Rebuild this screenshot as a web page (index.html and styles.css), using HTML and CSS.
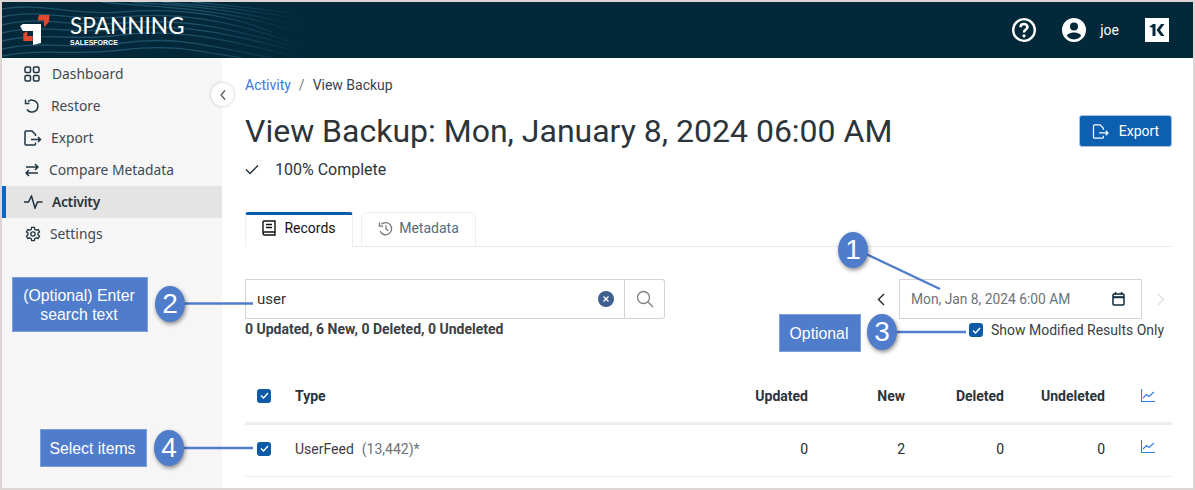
FILE: index.html
```html
<!DOCTYPE html>
<html lang="en">
<head>
<meta charset="utf-8">
<title>View Backup</title>
<link rel="stylesheet" href="styles.css">
</head>
<body>
<div class="frame">
  <header class="topbar">
    <svg class="waves" width="330" height="56" viewBox="0 0 330 56" fill="none" stroke="#1f5068" stroke-width="1.300">
      <path d="M0 7C40 0 70 14 120 10S220 10 270 30"/>
      <path d="M0 15C40 6 70 20 120 15S220 16 290 40"/>
      <path d="M0 23C40 13 70 26 120 21S220 22 310 50"/>
      <path d="M0 31C40 21 70 33 120 27S220 28 320 56"/>
      <path d="M0 39C40 29 70 40 120 33S220 36 300 56"/>
      <path d="M0 47C40 38 70 48 120 41S200 42 270 56"/>
      <path d="M0 54C40 46 70 54 120 48S190 48 240 56"/>
      <path d="M100 0C150 6 230 2 330 42"/>
      <path d="M130 0C170 4 230 2 330 34"/>
      <path d="M160 0C200 4 260 6 330 26"/>
      <path d="M190 0C230 4 280 8 330 18"/>
    </svg>
    <div class="brand">
      <svg class="brand-mark" width="32" height="32" viewBox="0 0 32 32">
        <g transform="translate(0 1)">
          <path d="M0 11L3 9H21V28L13 30V16H3Z" fill="#fff"/>
          <path d="M19 0H29.500L29 7L24 12V5.500H17.500Z" fill="#e2492f"/>
          <path d="M3.300 18.500L7.300 16V21H12.700V26H3.300Z" fill="#e2492f"/>
        </g>
      </svg>
      <div class="brand-text">
        <div class="brand-name">SPANNING</div>
        <div class="brand-sub">SALESFORCE</div>
      </div>
    </div>
    <div class="top-actions">
      <svg class="top-help" width="26" height="26" viewBox="0 0 24 24" fill="none" stroke="#fff">
        <circle cx="12" cy="12" r="10" stroke-width="2.200"/>
        <path d="M8.800 9.400C8.800 7.600 10.200 6.500 12 6.500S15.200 7.700 15.200 9.300C15.200 11.600 12 11.600 12 14.200" stroke-width="2.400"/>
        <circle cx="12" cy="17.400" r="1.500" fill="#fff" stroke="none"/>
      </svg>
      <svg class="top-user" width="24" height="24" viewBox="0 0 24 24">
        <path fill-rule="evenodd" fill="#fff" d="M12 0a12 12 0 1 0 0 24a12 12 0 0 0 0-24ZM12 4.600a4 4 0 1 1 0 8a4 4 0 0 1 0-8ZM12 21.400c-3 0-5.600-1.400-7.100-3.600c.4-2 4-3.300 7.100-3.300s6.700 1.300 7.100 3.300c-1.500 2.200-4.100 3.600-7.100 3.600Z"/>
      </svg>
      <span class="top-name">joe</span>
      <span class="kbadge">
        <svg width="16" height="12" viewBox="0 0 16 12"><path d="M0 3L4 0H6.500V12H3.500V3.500ZM7.500 6L12 0H15.500L11 6L15.500 12H12Z" fill="#02283a"/></svg>
      </span>
    </div>
  </header>
  <div class="body">
    <nav class="sidebar">
      <a class="nav-item nav-dash">
        <svg width="16" height="16" viewBox="0 0 16 16" fill="none" stroke="#1f3442" stroke-width="1.500"><rect x="1" y="1" width="5.500" height="5.500" rx="1.200"/><rect x="9.500" y="1" width="5.500" height="5.500" rx="1.200"/><rect x="1" y="9.500" width="5.500" height="5.500" rx="1.200"/><rect x="9.500" y="9.500" width="5.500" height="5.500" rx="1.200"/></svg>
        <span>Dashboard</span>
      </a>
      <a class="nav-item nav-rest">
        <svg width="16" height="16" viewBox="0 0 16 16" fill="none" stroke="#1f3442" stroke-width="1.500"><path d="M4 3.600A6 6 0 1 1 3 11.500"/><path d="M1.500 1.500V5.500H5.500" stroke-width="1.400"/></svg>
        <span>Restore</span>
      </a>
      <a class="nav-item nav-exp">
        <svg width="18" height="16" viewBox="0 0 18 16" fill="none" stroke="#1f3442" stroke-width="1.500"><path d="M11.500 12.500V14A1 1 0 0 1 10.500 15H2A1 1 0 0 1 1 14V2A1 1 0 0 1 2 1H8L11.500 4.500V6"/><path d="M7 9.500H16.500M14 7L16.500 9.500L14 12"/></svg>
        <span>Export</span>
      </a>
      <a class="nav-item nav-cmp">
        <svg width="14" height="14" viewBox="0 0 14 14" fill="none" stroke="#1f3442" stroke-width="1.500"><path d="M1 4H13M10 1L13 4L10 7"/><path d="M13 10H1M4 7L1 10L4 13"/></svg>
        <span>Compare Metadata</span>
      </a>
      <a class="nav-item nav-act is-active">
        <svg width="19" height="14" viewBox="0 0 19 14" fill="none" stroke="#1f3442" stroke-width="1.500"><path d="M0 7H4.500L7.500 1L11 13L13.500 7H18.500"/></svg>
        <span>Activity</span>
      </a>
      <a class="nav-item nav-set">
        <svg width="16" height="16" viewBox="0 0 24 24" fill="none" stroke="#1f3442" stroke-width="2"><circle cx="12" cy="12" r="3.200"/><path d="M10 2H14L14.600 5A7.500 7.500 0 0 1 16.900 6.300L19.800 5.300L21.800 8.700L19.500 10.700A7.500 7.500 0 0 1 19.500 13.300L21.800 15.300L19.800 18.700L16.900 17.700A7.500 7.500 0 0 1 14.600 19L14 22H10L9.400 19A7.500 7.500 0 0 1 7.100 17.700L4.200 18.700L2.200 15.300L4.500 13.300A7.500 7.500 0 0 1 4.500 10.700L2.200 8.700L4.200 5.300L7.100 6.300A7.500 7.500 0 0 1 9.400 5Z"/></svg>
        <span>Settings</span>
      </a>
    </nav>
    <main class="main">
      <div class="crumbs"><a class="crumb-link">Activity</a><span class="crumb-sep">/</span><span>View Backup</span></div>
      <div class="title-row">
        <h1 class="title">View Backup: Mon, January 8, 2024 06:00 AM</h1>
        <button class="export-btn">
          <svg width="18" height="15" viewBox="0 0 18 16" fill="none" stroke="#fff" stroke-width="1.300"><path d="M11.500 12.500V14A1 1 0 0 1 10.500 15H2A1 1 0 0 1 1 14V2A1 1 0 0 1 2 1H8L11.500 4.500V6"/><path d="M7 9.500H16.500M14 7L16.500 9.500L14 12"/></svg>
          <span>Export</span>
        </button>
      </div>
      <div class="status">
        <svg width="14" height="11" viewBox="0 0 14 11" fill="none" stroke="#1f3442" stroke-width="1.400"><path d="M1 5.500L5 9.500L13 1.500"/></svg>
        <span>100% Complete</span>
      </div>
      <div class="tabs">
        <div class="tab is-current">
          <svg width="14" height="16" viewBox="0 0 14 16" fill="none" stroke="#111" stroke-width="1.400"><path d="M1 13V2A1 1 0 0 1 2 1H13V12H2.500A1.500 1.500 0 0 0 2.500 15H13V12"/><path d="M4 4.500H10M4 7.500H10"/></svg>
          <span>Records</span>
        </div>
        <div class="tab">
          <svg width="15" height="15" viewBox="0 0 16 16" fill="none" stroke="#777" stroke-width="1.400"><path d="M3.500 3.500A6.500 6.500 0 1 1 2.200 11"/><path d="M1.500 1.500V5.500H5.500M8.500 4.500V8.500L11 10.500"/></svg>
          <span>Metadata</span>
        </div>
      </div>
      <div class="controls">
        <div class="search-col">
          <div class="search">
            <div class="search-input">
              <span>user</span>
              <span class="clear"><svg width="6" height="6" viewBox="0 0 6 6" stroke="#fff" stroke-width="1.300"><path d="M0.500 0.500L5.500 5.500M5.500 0.500L0.500 5.500"/></svg></span>
            </div>
            <div class="search-btn">
              <svg width="18" height="18" viewBox="0 0 18 18" fill="none" stroke="#808080" stroke-width="1.300"><circle cx="7.500" cy="7.500" r="6"/><path d="M11.800 11.800L17 17"/></svg>
            </div>
          </div>
          <div class="summary">0 Updated, 6 New, 0 Deleted, 0 Undeleted</div>
        </div>
        <div class="date-col">
          <div class="date-row">
            <svg class="chev" width="8" height="13" viewBox="0 0 8 13" fill="none" stroke="#222" stroke-width="1.400"><path d="M7 1L1.500 6.500L7 12"/></svg>
            <div class="date-input">
              <span>Mon, Jan 8, 2024 6:00 AM</span>
              <svg width="13" height="14" viewBox="0 0 13 14" fill="none" stroke="#0f2a3a" stroke-width="1.500"><rect x="1" y="2" width="11" height="11" rx="1"/><path d="M1 5.200H12" stroke-width="2"/><path d="M3.500 0V2.500M9.500 0V2.500"/></svg>
            </div>
            <svg class="chev" width="8" height="13" viewBox="0 0 8 13" fill="none" stroke="#dcdcdc" stroke-width="1.400"><path d="M1 1L6.500 6.500L1 12"/></svg>
          </div>
          <div class="modified">
            <span class="check"><svg width="9" height="7" viewBox="0 0 9 7" fill="none" stroke="#fff" stroke-width="1.400"><path d="M1 3.500L3.500 6L8 1"/></svg></span>
            <span>Show Modified Results Only</span>
          </div>
        </div>
      </div>
      <div class="table">
        <div class="row row-head">
          <span class="cell-check"><span class="check"><svg width="9" height="7" viewBox="0 0 9 7" fill="none" stroke="#fff" stroke-width="1.400"><path d="M1 3.500L3.500 6L8 1"/></svg></span></span>
          <span>Type</span>
          <span class="num">Updated</span>
          <span class="num">New</span>
          <span class="num">Deleted</span>
          <span class="num">Undeleted</span>
          <span class="cell-chart"><svg width="14" height="13" viewBox="0 0 14 13" fill="none" stroke="#2f7be5" stroke-width="1.100"><path d="M0.500 0V12.500H14"/><path d="M2 9L5.500 5.500L8 7.500L13 3"/></svg></span>
        </div>
        <div class="row row-data">
          <span class="cell-check"><span class="check"><svg width="9" height="7" viewBox="0 0 9 7" fill="none" stroke="#fff" stroke-width="1.400"><path d="M1 3.500L3.500 6L8 1"/></svg></span></span>
          <span class="type-cell"><span class="type-name">UserFeed</span><span class="type-count">(13,442)*</span></span>
          <span class="num">0</span>
          <span class="num">2</span>
          <span class="num">0</span>
          <span class="num">0</span>
          <span class="cell-chart"><svg width="14" height="13" viewBox="0 0 14 13" fill="none" stroke="#2f7be5" stroke-width="1.100"><path d="M0.500 0V12.500H14"/><path d="M2 9L5.500 5.500L8 7.500L13 3"/></svg></span>
        </div>
      </div>
    </main>
  </div>
  <span class="collapse"><svg width="6" height="10" viewBox="0 0 6 10" fill="none" stroke="#555" stroke-width="1.200"><path d="M5 0.500L1 5L5 9.500"/></svg></span>
  <svg class="leaders" width="1195" height="490" viewBox="0 0 1195 490" fill="none" stroke="#4f7ccb" stroke-width="2.400">
    <path d="M866 254L940 289"/>
    <path d="M180 303.500H253"/>
    <path d="M895 332H966"/>
    <path d="M180 448H253"/>
  </svg>
  <div class="note note-search">(Optional) Enter<br>search text</div>
  <div class="note note-optional">Optional</div>
  <div class="note note-select">Select items</div>
  <div class="bubble b1">1</div>
  <div class="bubble b2">2</div>
  <div class="bubble b3">3</div>
  <div class="bubble b4">4</div>
</div>
</body>
</html>
```
FILE: styles.css
```css
* { box-sizing: border-box; }
html, body { margin: 0; padding: 0; }
body { width: 1195px; height: 490px; overflow: hidden; background: #fff; font-family: Roboto, "Liberation Sans", sans-serif; color: #212b33; }
.frame { position: relative; width: 1195px; height: 490px; border: 2px solid #dcd5d3; display: flex; flex-direction: column; overflow: hidden; }
.topbar { position: relative; height: 56px; flex: none; background: #02283a; display: flex; align-items: center; justify-content: space-between; }
.waves { position: absolute; left: 0; top: 0; -webkit-mask-image: linear-gradient(90deg, #000 60%, transparent 92%); mask-image: linear-gradient(90deg, #000 60%, transparent 92%); }
.brand { position: relative; display: flex; align-items: center; gap: 18px; padding-left: 18px; }
.brand-text { color: #fff; padding-top: 1px; }
.brand-name { font-family: Lato, sans-serif; font-size: 22.6px; line-height: 24px; }
.brand-sub { font-family: "Liberation Sans", sans-serif; font-size: 7px; font-weight: 700; line-height: 8px; margin-top: 1px; }
.top-actions { display: flex; align-items: center; padding-right: 24px; }
.top-user { margin-left: 25px; }
.top-name { margin-left: 14px; color: #fff; font-size: 14px; }
.kbadge { margin-left: 26px; width: 24px; height: 24px; background: #fff; display: flex; align-items: center; justify-content: center; }
.body { flex: 1; display: flex; min-height: 0; }
.sidebar { width: 220px; flex: none; background: #f6f6f6; font-family: "Noto Sans", sans-serif; font-size: 13.8px; color: #3d4a55; }
.nav-item { height: 32px; display: flex; align-items: center; padding-left: 22px; }
.nav-item span { margin-bottom: 2px; }
.nav-dash { gap: 12px; }
.nav-rest { gap: 11px; }
.nav-exp { gap: 9px; }
.nav-cmp { gap: 10px; padding-left: 23px; }
.nav-act { gap: 9px; }
.nav-set { gap: 9px; padding-left: 23px; }
.is-active { background: #e4e4e4; border-left: 4px solid #0a66c9; padding-left: 18px; font-weight: 600; letter-spacing: -0.3px; color: #2a333b; }
.main { flex: 1; min-width: 0; padding: 0 21px 0 23px; }
.crumbs { display: flex; align-items: center; height: 20px; margin-top: 17px; font-size: 14px; color: #3a444c; }
.crumb-link { color: #3a76e0; }
.crumb-sep { margin: 0 8px; color: #777; }
.title-row { display: flex; justify-content: space-between; align-items: flex-start; margin-top: 15px; }
.title { margin: 0; font-size: 32px; line-height: 42px; font-weight: 400; color: #2c343a; }
.export-btn { margin-top: 5px; width: 93px; height: 32px; background: #0d5fb0; border: 1px solid #a9c2dc; border-radius: 3px; color: #fff; display: flex; align-items: center; justify-content: center; gap: 9px; font: 14px Roboto, sans-serif; padding: 0; }
.status { display: flex; align-items: center; gap: 16px; margin-top: 5px; height: 24px; font-size: 16px; color: #2c343a; }
.tabs { display: flex; gap: 8px; margin-top: 31px; height: 35px; border-bottom: 1px solid #eaeaea; }
.tab { width: 115px; height: 35px; display: flex; align-items: center; justify-content: center; gap: 6px; border: 1px solid #eeeeee; border-bottom: 0; border-radius: 6px 6px 0 0; padding-bottom: 4px; font-size: 14px; color: #556a80; }
.tab.is-current { width: 108px; gap: 8px; border-top: 3px solid #0a5aaa; border-color: #0a5aaa #eeeeee #fff #eeeeee; border-radius: 3px 3px 0 0; padding-bottom: 7px; color: #111; background: #fff; }
.controls { display: flex; justify-content: space-between; margin-top: 32px; }
.search { display: flex; width: 420px; height: 40px; }
.search-input { flex: 1; border: 1px solid #d4d4d4; display: flex; align-items: center; justify-content: space-between; padding: 0 10px 0 11px; font-size: 15px; color: #333; }
.clear { width: 16px; height: 16px; border-radius: 50%; background: #3f5f8f; display: flex; align-items: center; justify-content: center; }
.search-btn { width: 40px; border: 1px solid #d4d4d4; border-left: 0; border-radius: 0 3px 3px 0; display: flex; align-items: center; justify-content: center; }
.summary { margin-top: 2px; font-size: 14px; font-weight: 700; line-height: 16px; color: #3a4046; }
.date-col { width: 293px; margin-right: 2px; }
.date-row { display: flex; align-items: center; }
.date-input { width: 243px; height: 40px; margin-left: 14px; border: 1px solid #d4d4d4; display: flex; align-items: center; justify-content: space-between; padding: 0 16px 0 11px; font-size: 13.8px; color: #6b7278; }
.date-row .chev:last-child { margin-left: 15px; }
.modified { display: flex; align-items: center; gap: 8px; margin-top: 3px; margin-left: 92px; font-size: 14px; white-space: nowrap; color: #3a4046; }
.check { width: 14px; height: 14px; flex: none; background: #0d5aa8; border-radius: 3px; display: flex; align-items: center; justify-content: center; }
.table { margin-top: 31px; }
.row { display: grid; grid-template-columns: 50px 413px 100px 97px 99px 101px 1fr; align-items: center; font-size: 14px; }
.row-head { height: 56px; font-weight: 700; color: #2a333b; border-bottom: 3px solid #eeeeee; }
.row-data { height: 52px; padding-bottom: 4px; border-bottom: 1px solid #eeeeee; }
.cell-check { padding-left: 12px; display: flex; }
.num { text-align: right; }
.cell-chart { display: flex; justify-content: flex-end; padding-right: 17px; }
.row-data .cell-chart { padding-bottom: 4px; }
.type-cell { display: flex; gap: 8px; }
.type-name { color: #3e3a4a; }
.type-count { color: #6b7278; }
.collapse { position: absolute; left: 209px; top: 81px; width: 23px; height: 23px; border-radius: 50%; background: #fff; box-shadow: 0 0 3px rgba(0,0,0,.25); display: flex; align-items: center; justify-content: center; }
.leaders { position: absolute; left: -2px; top: -2px; pointer-events: none; }
.note { position: absolute; background: #4f7ccb; border: 1px solid #7fa0da; color: #fff; font-family: "Liberation Sans", sans-serif; font-size: 15.8px; line-height: 19px; text-align: center; display: flex; align-items: center; justify-content: center; padding-right: 2px; }
.note-search { left: 10px; top: 275px; width: 136px; height: 55px; }
.note-optional { left: 777px; top: 312px; width: 82px; height: 38px; }
.note-select { left: 38px; top: 427px; width: 107px; height: 38px; }
.bubble { position: absolute; width: 30px; height: 36px; border-radius: 50%; background: #4f7ccb; color: #fff; font-family: "Liberation Sans", sans-serif; font-size: 28px; line-height: 36px; text-align: center; box-shadow: 1px 2px 4px rgba(0,0,0,.45); }
.b1 { left: 836px; top: 230px; }
.b2 { left: 153px; top: 284px; }
.b3 { left: 865px; top: 312px; }
.b4 { left: 152px; top: 428px; }
```
